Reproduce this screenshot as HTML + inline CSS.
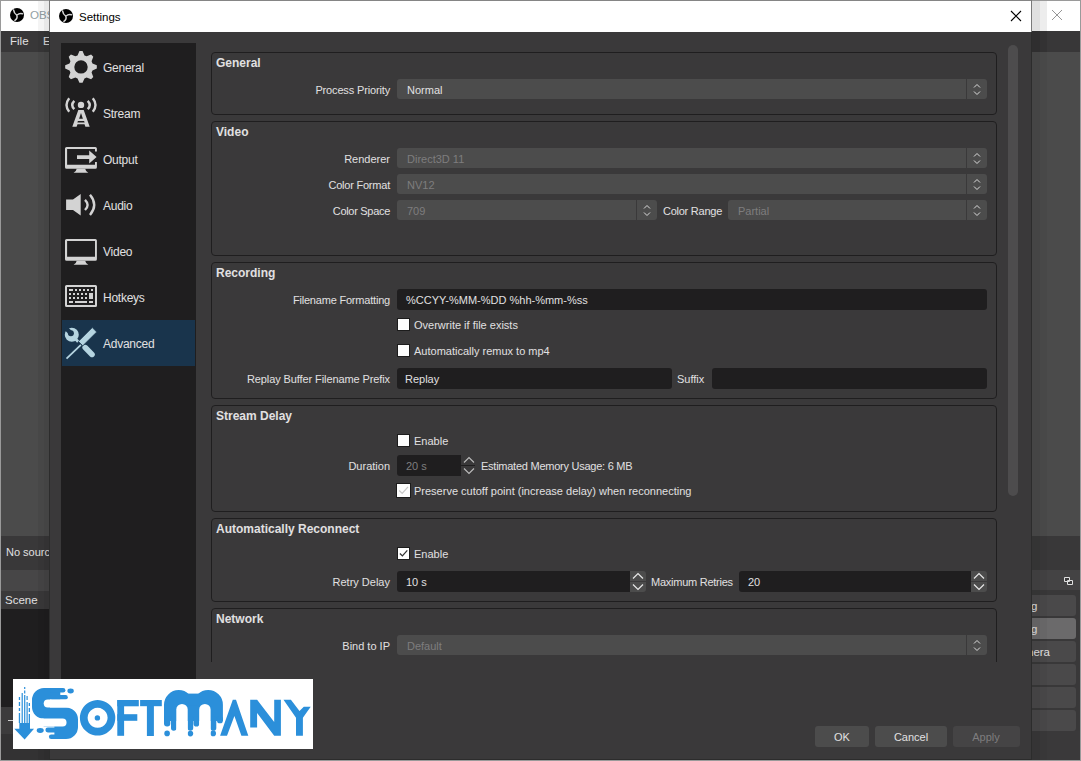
<!DOCTYPE html>
<html><head><meta charset="utf-8"><style>
html,body{margin:0;padding:0;}
body{width:1081px;height:761px;overflow:hidden;position:relative;background:#4b4b4b;font-family:"Liberation Sans",sans-serif;}
.r{position:absolute;box-sizing:content-box;}
.t{position:absolute;white-space:nowrap;}
svg.r{overflow:visible}
</style></head><body>
<div class="r" style="left:0px;top:0px;width:1081px;height:761px;background:#4b4b4b;"></div>
<div class="r" style="left:0px;top:0px;width:1081px;height:1px;background:#9a9a9a;"></div>
<div class="r" style="left:0px;top:0px;width:1px;height:761px;background:#9a9a9a;"></div>
<div class="r" style="left:1080px;top:0px;width:1px;height:761px;background:#9a9a9a;"></div>
<div class="r" style="left:0px;top:760px;width:1081px;height:1px;background:#9a9a9a;"></div>
<div class="r" style="left:1px;top:1px;width:1079px;height:30px;background:#ffffff;"></div>
<div class="r" style="left:1px;top:31px;width:1079px;height:21px;background:#383738;"></div>
<svg class="r" style="left:10px;top:8px" width="14" height="14" viewBox="-10 -10 20 20"><circle cx="0" cy="0" r="10" fill="#000"/>
<path d="M-0.3 0.3 Q-4.2 -2 -4.9 -7.2 M-0.3 0.3 Q3.4 -2.8 7.6 -1.8 M-0.3 0.3 Q1.4 4.6 -3 7.6" fill="none" stroke="#d8d8d8" stroke-width="2.1" stroke-linecap="round"/></svg>
<div class="t" style="left:30px;top:10.27px;font-size:11.5px;line-height:11.5px;color:#93a1a4;font-weight:normal;">OBS</div>
<div class="t" style="left:10px;top:36.27px;font-size:11.5px;line-height:11.5px;color:#e1e0e1;font-weight:normal;">File</div>
<div class="t" style="left:43px;top:36.27px;font-size:11.5px;line-height:11.5px;color:#e1e0e1;font-weight:normal;">E</div>
<svg class="r" style="left:1052px;top:10px" width="10" height="10" viewBox="0 0 10 10"><path d="M0 0 L10 10 M10 0 L0 10" stroke="#8a8a8a" stroke-width="0.9"/></svg>
<div class="r" style="left:1px;top:536px;width:49px;height:34px;background:#393839;"></div>
<div class="t" style="left:6px;top:546.69px;font-size:11px;line-height:11px;color:#e1e0e1;font-weight:normal;">No source</div>
<div class="r" style="left:1px;top:570px;width:49px;height:21px;background:#474647;"></div>
<div class="r" style="left:1px;top:591px;width:49px;height:18px;background:#3a393a;"></div>
<div class="t" style="left:5px;top:595.27px;font-size:11.5px;line-height:11.5px;color:#e1e0e1;font-weight:normal;">Scene</div>
<div class="r" style="left:1px;top:609px;width:49px;height:98px;background:#1f1e1f;"></div>
<div class="r" style="left:1px;top:707px;width:49px;height:27px;background:#3c3b3c;"></div>
<div class="r" style="left:8px;top:720px;width:6px;height:1px;background:#d0d0d0;"></div>
<div class="r" style="left:1px;top:734px;width:49px;height:26px;background:#333233;"></div>
<div class="r" style="left:1031px;top:536px;width:49px;height:34px;background:#393839;"></div>
<div class="r" style="left:1031px;top:570px;width:49px;height:20px;background:#444344;"></div>
<div class="r" style="left:1031px;top:590px;width:49px;height:170px;background:#393839;"></div>
<div class="r" style="left:1020px;top:595px;width:56px;height:21px;background:#4a494a;border-radius:3px;"></div>
<div class="r" style="left:1020px;top:618px;width:56px;height:21px;background:#6b6a6b;border-radius:3px;"></div>
<div class="r" style="left:1020px;top:641px;width:56px;height:21px;background:#4a494a;border-radius:3px;"></div>
<div class="r" style="left:1020px;top:664px;width:56px;height:21px;background:#4a494a;border-radius:3px;"></div>
<div class="r" style="left:1020px;top:687px;width:56px;height:21px;background:#4a494a;border-radius:3px;"></div>
<div class="r" style="left:1020px;top:710px;width:56px;height:21px;background:#4a494a;border-radius:3px;"></div>
<div class="t" style="left:1031px;top:601.27px;font-size:11.5px;line-height:11.5px;color:#e1e0e1;font-weight:normal;">g</div>
<div class="t" style="left:1031px;top:624.27px;font-size:11.5px;line-height:11.5px;color:#e1e0e1;font-weight:normal;">g</div>
<div class="t" style="left:1031px;top:647.27px;font-size:11.5px;line-height:11.5px;color:#e1e0e1;font-weight:normal;left:1027px;">nera</div>
<div class="r" style="left:1031px;top:731px;width:49px;height:29px;background:#3a393a;"></div>
<svg class="r" style="left:1064px;top:577px" width="9" height="8" viewBox="0 0 9 8"><path d="M0.5 0.5 H5.5 V4.5 H0.5 Z M3.5 3.5 H8.5 V7.5 H3.5 Z" fill="#3c3b3c" stroke="#e0e0e0" stroke-width="1"/></svg>
<div class="r" style="left:38px;top:1px;width:6px;height:759px;background:rgba(0,0,0,0.045);"></div>
<div class="r" style="left:44px;top:1px;width:5px;height:759px;background:rgba(0,0,0,0.09);"></div>
<div class="r" style="left:1032px;top:1px;width:8px;height:30px;background:rgba(0,0,0,0.12);"></div>
<div class="r" style="left:1040px;top:1px;width:7px;height:30px;background:rgba(0,0,0,0.07);"></div>
<div class="r" style="left:1032px;top:31px;width:8px;height:21px;background:rgba(0,0,0,0.16);"></div>
<div class="r" style="left:1040px;top:31px;width:7px;height:21px;background:rgba(0,0,0,0.08);"></div>
<div class="r" style="left:1032px;top:52px;width:8px;height:708px;background:rgba(0,0,0,0.07);"></div>
<div class="r" style="left:1040px;top:52px;width:7px;height:708px;background:rgba(0,0,0,0.03);"></div>
<div class="r" style="left:49px;top:0px;width:983px;height:760px;background:#2c2c2c;"></div>
<div class="r" style="left:49px;top:0px;width:983px;height:1px;background:#858585;"></div>
<div class="r" style="left:49px;top:0px;width:1px;height:32px;background:#7a7a7a;"></div>
<div class="r" style="left:1031px;top:0px;width:1px;height:32px;background:#7a7a7a;"></div>
<div class="r" style="left:50px;top:1px;width:981px;height:31px;background:#ffffff;"></div>
<div class="r" style="left:50px;top:32px;width:981px;height:727px;background:#3a393a;"></div>
<svg class="r" style="left:59px;top:9px" width="14" height="14" viewBox="-10 -10 20 20"><circle cx="0" cy="0" r="10" fill="#000"/>
<path d="M-0.3 0.3 Q-4.2 -2 -4.9 -7.2 M-0.3 0.3 Q3.4 -2.8 7.6 -1.8 M-0.3 0.3 Q1.4 4.6 -3 7.6" fill="none" stroke="#d8d8d8" stroke-width="2.1" stroke-linecap="round"/></svg>
<div class="t" style="left:79px;top:12.27px;font-size:11.5px;line-height:11.5px;color:#000;font-weight:normal;">Settings</div>
<svg class="r" style="left:1011px;top:11px" width="10" height="10" viewBox="0 0 10 10"><path d="M0 0 L10 10 M10 0 L0 10" stroke="#000" stroke-width="1.1"/></svg>
<div class="r" style="left:61px;top:43px;width:135px;height:673px;background:#1f1e1f;"></div>
<div class="r" style="left:62px;top:320px;width:133px;height:46px;background:#19344c;"></div>
<div class="t" style="left:103px;top:61.84px;font-size:12px;line-height:12px;color:#e1e0e1;font-weight:normal;letter-spacing:-0.25px;">General</div>
<div class="t" style="left:103px;top:107.84px;font-size:12px;line-height:12px;color:#e1e0e1;font-weight:normal;letter-spacing:-0.25px;">Stream</div>
<div class="t" style="left:103px;top:153.84px;font-size:12px;line-height:12px;color:#e1e0e1;font-weight:normal;letter-spacing:-0.25px;">Output</div>
<div class="t" style="left:103px;top:199.84px;font-size:12px;line-height:12px;color:#e1e0e1;font-weight:normal;letter-spacing:-0.25px;">Audio</div>
<div class="t" style="left:103px;top:245.84px;font-size:12px;line-height:12px;color:#e1e0e1;font-weight:normal;letter-spacing:-0.25px;">Video</div>
<div class="t" style="left:103px;top:291.84px;font-size:12px;line-height:12px;color:#e1e0e1;font-weight:normal;letter-spacing:-0.25px;">Hotkeys</div>
<div class="t" style="left:103px;top:337.84px;font-size:12px;line-height:12px;color:#e1e0e1;font-weight:normal;letter-spacing:-0.25px;">Advanced</div>
<svg class="r" style="left:0;top:0" width="1081" height="761"><path d="M77.52 55.42 L79.44 51.08 L82.56 51.08 L84.48 55.42 L86.66 56.32 L91.09 54.61 L93.29 56.81 L91.58 61.24 L92.48 63.42 L96.82 65.34 L96.82 68.46 L92.48 70.38 L91.58 72.56 L93.29 76.99 L91.09 79.19 L86.66 77.48 L84.48 78.38 L82.56 82.72 L79.44 82.72 L77.52 78.38 L75.34 77.48 L70.91 79.19 L68.71 76.99 L70.42 72.56 L69.52 70.38 L65.18 68.46 L65.18 65.34 L69.52 63.42 L70.42 61.24 L68.71 56.81 L70.91 54.61 L75.34 56.32 Z M87.7 66.9 A6.7 6.7 0 1 0 74.3 66.9 A6.7 6.7 0 1 0 87.7 66.9 Z" fill="#d3d3d3" fill-rule="evenodd"/></svg>
<svg class="r" style="left:0;top:0" width="1081" height="761"><g fill="none" stroke="#d3d3d3" stroke-width="2.4">
<path d="M69.2 98.2 Q63.8 105 69.2 111.8"/><path d="M92.8 98.2 Q98.2 105 92.8 111.8"/>
<path d="M74.3 100.8 Q70.2 105 74.3 109.2"/><path d="M87.7 100.8 Q91.8 105 87.7 109.2"/></g>
<circle cx="81" cy="104.9" r="3.2" fill="#d3d3d3"/>
<path d="M78.3 110 H83.7 L89.7 126.8 H85.4 L84.5 124.3 H77.5 L76.6 126.8 H72.3 Z M81 113 L82.9 118.8 H79.1 Z M77.9 121.1 H84.1 L84.6 122.5 H77.4 Z" fill="#d3d3d3" fill-rule="evenodd"/></svg>
<svg class="r" style="left:0;top:0" width="1081" height="761"><g fill="#d3d3d3">
<path d="M66.6 147 H95.3 Q96.9 147 96.9 148.6 V151.4 H95 V149.1 H67.1 V164.8 H95 V162.1 H96.9 V167.2 Q96.9 168.8 95.3 168.8 H66.6 Q65 168.8 65 167.2 V148.6 Q65 147 66.6 147 Z"/>
<path d="M76.7 168.8 H85.2 Q85.6 171.5 88.3 172.8 H73.6 Q76.3 171.5 76.7 168.8 Z"/>
<path d="M77 155.2 H89.2 V150.5 L96.6 157 L89.2 163.4 V159 H77 Z"/></g></svg>
<svg class="r" style="left:0;top:0" width="1081" height="761"><g fill="#d3d3d3">
<path d="M66.1 199.5 H73 L80.7 194 V215.6 L73 210.1 H66.1 Z"/></g>
<g fill="none" stroke="#d3d3d3" stroke-width="2.4">
<path d="M85 199.8 Q90.2 204.9 85 210"/><path d="M90 194.8 Q98.4 204.9 90 215"/></g></svg>
<svg class="r" style="left:0;top:0" width="1081" height="761"><g fill="#d3d3d3">
<path d="M66.6 239 H95.3 Q96.9 239 96.9 240.6 V259.2 Q96.9 260.8 95.3 260.8 H66.6 Q65 260.8 65 259.2 V240.6 Q65 239 66.6 239 Z M67.1 241.1 V256.8 H95 V241.1 Z" fill-rule="evenodd"/>
<path d="M76.7 260.8 H85.2 Q85.6 263.5 88.3 264.8 H73.6 Q76.3 263.5 76.7 260.8 Z"/></g></svg>
<svg class="r" style="left:0;top:0" width="1081" height="761"><g fill="#d3d3d3">
<path d="M66.5 285 H95.5 Q97 285 97 286.5 V305.5 Q97 307 95.5 307 H66.5 Q65 307 65 305.5 V286.5 Q65 285 66.5 285 Z M67 287 V305 H95 V287 Z" fill-rule="evenodd"/>
<rect x="69" y="289" width="4" height="2"/><rect x="75" y="289" width="2" height="2"/><rect x="79" y="289" width="2" height="2"/><rect x="83" y="289" width="2" height="2"/><rect x="87" y="289" width="2" height="2"/><rect x="91" y="289" width="2" height="2"/><rect x="69" y="293" width="2" height="2"/><rect x="69" y="297" width="2" height="2"/><rect x="73" y="293" width="2" height="2"/><rect x="73" y="297" width="2" height="2"/><rect x="77" y="293" width="2" height="2"/><rect x="77" y="297" width="2" height="2"/><rect x="81" y="293" width="2" height="2"/><rect x="81" y="297" width="2" height="2"/><rect x="85" y="293" width="2" height="2"/><rect x="85" y="297" width="2" height="2"/><rect x="89" y="293" width="4" height="6"/><rect x="69" y="301" width="4" height="2"/><rect x="75" y="301" width="12" height="2"/><rect x="89" y="301" width="4" height="2"/></g></svg>
<svg class="r" style="left:0;top:0" width="1081" height="761">
<circle cx="71.8" cy="334.8" r="7" fill="#b5d4e0"/>
<circle cx="70.9" cy="333.2" r="3" fill="#19344c"/>
<path d="M70.9 333.2 L65.3 327.6" stroke="#19344c" stroke-width="4.4"/>
<path d="M75.5 339 L78.2 341.7" stroke="#b5d4e0" stroke-width="3"/>
<path d="M85.2 347.6 L92 354.4" stroke="#b5d4e0" stroke-width="5.6" stroke-linecap="round"/>
<path d="M78.41 341.4 L92.31 327.6 L96.69 332 L82.79 345.8 Z" fill="#b5d4e0" stroke="#19344c" stroke-width="0.7"/>
<path d="M80.9 344.8 L66.5 358.7" stroke="#b5d4e0" stroke-width="1.8"/>
</svg>
<div class="r" style="left:197px;top:43px;width:810px;height:619px;overflow:hidden;">
<div class="r" style="left:-197px;top:-43px;width:1081px;height:761px;">
<div class="r" style="left:211px;top:52px;width:784px;height:61px;border:1px solid #1f1e1f;border-radius:4px;"></div>
<div class="t" style="left:216px;top:56.84px;font-size:12px;line-height:12px;color:#e1e0e1;font-weight:bold;">General</div>
<div class="t" style="right:691px;top:84.69px;font-size:11px;line-height:11px;color:#e1e0e1;font-weight:normal;letter-spacing:-0.15px;">Process Priority</div>
<div class="r" style="left:397px;top:79px;width:590px;height:20px;background:#4c4c4c;border-radius:3px;"></div>
<div class="r" style="left:966px;top:79px;width:1px;height:20px;background:#3a393a;"></div>
<svg class="r" style="left:972px;top:82px" width="10" height="14" viewBox="0 0 10 14"><path d="M2 5.5 L5 2.5 L8 5.5 M2 9.5 L5 12.5 L8 9.5" fill="none" stroke="#dcdcdc" stroke-width="1"/></svg>
<div class="t" style="left:407px;top:84.69px;font-size:11px;line-height:11px;color:#e1e0e1;font-weight:normal;">Normal</div>
<div class="r" style="left:211px;top:121px;width:784px;height:133px;border:1px solid #1f1e1f;border-radius:4px;"></div>
<div class="t" style="left:216px;top:125.84px;font-size:12px;line-height:12px;color:#e1e0e1;font-weight:bold;">Video</div>
<div class="t" style="right:691px;top:153.69px;font-size:11px;line-height:11px;color:#e1e0e1;font-weight:normal;">Renderer</div>
<div class="r" style="left:397px;top:148px;width:590px;height:20px;background:#4c4c4c;border-radius:3px;"></div>
<div class="r" style="left:966px;top:148px;width:1px;height:20px;background:#3a393a;"></div>
<svg class="r" style="left:972px;top:151px" width="10" height="14" viewBox="0 0 10 14"><path d="M2 5.5 L5 2.5 L8 5.5 M2 9.5 L5 12.5 L8 9.5" fill="none" stroke="#dcdcdc" stroke-width="1"/></svg>
<div class="t" style="left:407px;top:153.69px;font-size:11px;line-height:11px;color:#7e7d7e;font-weight:normal;">Direct3D 11</div>
<div class="t" style="right:691px;top:179.69px;font-size:11px;line-height:11px;color:#e1e0e1;font-weight:normal;letter-spacing:-0.22px;">Color Format</div>
<div class="r" style="left:397px;top:174px;width:590px;height:20px;background:#4c4c4c;border-radius:3px;"></div>
<div class="r" style="left:966px;top:174px;width:1px;height:20px;background:#3a393a;"></div>
<svg class="r" style="left:972px;top:177px" width="10" height="14" viewBox="0 0 10 14"><path d="M2 5.5 L5 2.5 L8 5.5 M2 9.5 L5 12.5 L8 9.5" fill="none" stroke="#dcdcdc" stroke-width="1"/></svg>
<div class="t" style="left:407px;top:179.69px;font-size:11px;line-height:11px;color:#7e7d7e;font-weight:normal;">NV12</div>
<div class="t" style="right:691px;top:205.69px;font-size:11px;line-height:11px;color:#e1e0e1;font-weight:normal;letter-spacing:-0.3px;">Color Space</div>
<div class="r" style="left:397px;top:200px;width:260px;height:20px;background:#4c4c4c;border-radius:3px;"></div>
<div class="r" style="left:636px;top:200px;width:1px;height:20px;background:#3a393a;"></div>
<svg class="r" style="left:642px;top:203px" width="10" height="14" viewBox="0 0 10 14"><path d="M2 5.5 L5 2.5 L8 5.5 M2 9.5 L5 12.5 L8 9.5" fill="none" stroke="#dcdcdc" stroke-width="1"/></svg>
<div class="t" style="left:407px;top:205.69px;font-size:11px;line-height:11px;color:#7e7d7e;font-weight:normal;">709</div>
<div class="t" style="left:663px;top:205.69px;font-size:11px;line-height:11px;color:#e1e0e1;font-weight:normal;letter-spacing:-0.25px;">Color Range</div>
<div class="r" style="left:728px;top:200px;width:259px;height:20px;background:#4c4c4c;border-radius:3px;"></div>
<div class="r" style="left:966px;top:200px;width:1px;height:20px;background:#3a393a;"></div>
<svg class="r" style="left:972px;top:203px" width="10" height="14" viewBox="0 0 10 14"><path d="M2 5.5 L5 2.5 L8 5.5 M2 9.5 L5 12.5 L8 9.5" fill="none" stroke="#dcdcdc" stroke-width="1"/></svg>
<div class="t" style="left:738px;top:205.69px;font-size:11px;line-height:11px;color:#7e7d7e;font-weight:normal;">Partial</div>
<div class="r" style="left:211px;top:262px;width:784px;height:135px;border:1px solid #1f1e1f;border-radius:4px;"></div>
<div class="t" style="left:216px;top:266.84px;font-size:12px;line-height:12px;color:#e1e0e1;font-weight:bold;">Recording</div>
<div class="t" style="right:691px;top:294.69px;font-size:11px;line-height:11px;color:#e1e0e1;font-weight:normal;letter-spacing:-0.2px;">Filename Formatting</div>
<div class="r" style="left:397px;top:289px;width:590px;height:21px;background:#1f1e1f;border-radius:3px;"></div>
<div class="t" style="left:406px;top:294.69px;font-size:11px;line-height:11px;color:#e1e0e1;font-weight:normal;">%CCYY-%MM-%DD %hh-%mm-%ss</div>
<div class="r" style="left:398px;top:319px;width:11px;height:11px;background:#fdfdfd;box-shadow:0 0 0 1px #1c1c1c;"></div>
<div class="t" style="left:414px;top:319.69px;font-size:11px;line-height:11px;color:#e1e0e1;font-weight:normal;">Overwrite if file exists</div>
<div class="r" style="left:398px;top:345px;width:11px;height:11px;background:#fdfdfd;box-shadow:0 0 0 1px #1c1c1c;"></div>
<div class="t" style="left:414px;top:345.69px;font-size:11px;line-height:11px;color:#e1e0e1;font-weight:normal;">Automatically remux to mp4</div>
<div class="t" style="right:691px;top:373.69px;font-size:11px;line-height:11px;color:#e1e0e1;font-weight:normal;letter-spacing:-0.1px;">Replay Buffer Filename Prefix</div>
<div class="r" style="left:397px;top:368px;width:275px;height:21px;background:#1f1e1f;border-radius:3px;"></div>
<div class="t" style="left:405px;top:373.69px;font-size:11px;line-height:11px;color:#e1e0e1;font-weight:normal;">Replay</div>
<div class="t" style="left:677px;top:373.69px;font-size:11px;line-height:11px;color:#e1e0e1;font-weight:normal;">Suffix</div>
<div class="r" style="left:712px;top:368px;width:275px;height:21px;background:#1f1e1f;border-radius:3px;"></div>
<div class="r" style="left:211px;top:405px;width:784px;height:105px;border:1px solid #1f1e1f;border-radius:4px;"></div>
<div class="t" style="left:216px;top:409.84px;font-size:12px;line-height:12px;color:#e1e0e1;font-weight:bold;">Stream Delay</div>
<div class="r" style="left:398px;top:435px;width:11px;height:11px;background:#fdfdfd;box-shadow:0 0 0 1px #1c1c1c;"></div>
<div class="t" style="left:414px;top:435.69px;font-size:11px;line-height:11px;color:#e1e0e1;font-weight:normal;">Enable</div>
<div class="t" style="right:691px;top:460.69px;font-size:11px;line-height:11px;color:#e1e0e1;font-weight:normal;">Duration</div>
<div class="r" style="left:397px;top:455px;width:64px;height:21px;background:#1f1e1f;border-radius:3px 0 0 3px;"></div>
<div class="t" style="left:406px;top:460.69px;font-size:11px;line-height:11px;color:#7e7d7e;font-weight:normal;">20 s</div>
<svg class="r" style="left:461px;top:455px" width="14" height="21" viewBox="0 0 14 21"><path d="M3 7.5 L8 2.5 L13 7.5 M3 13.5 L8 18.5 L13 13.5" fill="none" stroke="#bdbdbd" stroke-width="1.1"/><path d="M0 10.5 H14" stroke="#1f1e1f" stroke-width="1"/></svg>
<div class="t" style="left:481px;top:460.69px;font-size:11px;line-height:11px;color:#e1e0e1;font-weight:normal;letter-spacing:-0.25px;">Estimated Memory Usage: 6 MB</div>
<div class="r" style="left:397px;top:484px;width:13px;height:13px;background:#fdfdfd;box-shadow:0 0 0 1px #1c1c1c;"></div>
<svg class="r" style="left:397px;top:484px" width="13" height="13" viewBox="0 0 13 13"><path d="M2.2 6.5 L5.2 9.4 L11.0 2.9" fill="none" stroke="#c8c8c8" stroke-width="1.3"/></svg>
<div class="t" style="left:414px;top:485.69px;font-size:11px;line-height:11px;color:#e1e0e1;font-weight:normal;">Preserve cutoff point (increase delay) when reconnecting</div>
<div class="r" style="left:211px;top:518px;width:784px;height:82px;border:1px solid #1f1e1f;border-radius:4px;"></div>
<div class="t" style="left:216px;top:522.84px;font-size:12px;line-height:12px;color:#e1e0e1;font-weight:bold;">Automatically Reconnect</div>
<div class="r" style="left:398px;top:548px;width:11px;height:11px;background:#fdfdfd;box-shadow:0 0 0 1px #1c1c1c;"></div>
<svg class="r" style="left:398px;top:548px" width="11" height="11" viewBox="0 0 11 11"><path d="M1.9 5.5 L4.4 7.9 L9.3 2.4" fill="none" stroke="#333" stroke-width="1.3"/></svg>
<div class="t" style="left:414px;top:548.69px;font-size:11px;line-height:11px;color:#e1e0e1;font-weight:normal;">Enable</div>
<div class="t" style="right:691px;top:576.69px;font-size:11px;line-height:11px;color:#e1e0e1;font-weight:normal;">Retry Delay</div>
<div class="r" style="left:397px;top:571px;width:233px;height:21px;background:#1f1e1f;border-radius:3px 0 0 3px;"></div>
<div class="t" style="left:406px;top:576.69px;font-size:11px;line-height:11px;color:#e1e0e1;font-weight:normal;">10 s</div>
<div class="r" style="left:630px;top:571px;width:16px;height:10px;background:#4c4c4c;border-radius:0 3px 0 0;"></div>
<div class="r" style="left:630px;top:582px;width:16px;height:10px;background:#4c4c4c;border-radius:0 0 3px 0;"></div>
<svg class="r" style="left:630px;top:571px" width="16" height="21" viewBox="0 0 16 21"><path d="M3 7.5 L8 2.5 L13 7.5 M3 13.5 L8 18.5 L13 13.5" fill="none" stroke="#e8e8e8" stroke-width="1.2"/></svg>
<div class="t" style="left:651px;top:576.69px;font-size:11px;line-height:11px;color:#e1e0e1;font-weight:normal;letter-spacing:-0.25px;">Maximum Retries</div>
<div class="r" style="left:739px;top:571px;width:232px;height:21px;background:#1f1e1f;border-radius:3px 0 0 3px;"></div>
<div class="t" style="left:748px;top:576.69px;font-size:11px;line-height:11px;color:#e1e0e1;font-weight:normal;">20</div>
<div class="r" style="left:971px;top:571px;width:16px;height:10px;background:#4c4c4c;border-radius:0 3px 0 0;"></div>
<div class="r" style="left:971px;top:582px;width:16px;height:10px;background:#4c4c4c;border-radius:0 0 3px 0;"></div>
<svg class="r" style="left:971px;top:571px" width="16" height="21" viewBox="0 0 16 21"><path d="M3 7.5 L8 2.5 L13 7.5 M3 13.5 L8 18.5 L13 13.5" fill="none" stroke="#e8e8e8" stroke-width="1.2"/></svg>
<div class="r" style="left:211px;top:608px;width:784px;height:91px;border:1px solid #1f1e1f;border-radius:4px;"></div>
<div class="t" style="left:216px;top:612.84px;font-size:12px;line-height:12px;color:#e1e0e1;font-weight:bold;">Network</div>
<div class="t" style="right:691px;top:640.69px;font-size:11px;line-height:11px;color:#e1e0e1;font-weight:normal;">Bind to IP</div>
<div class="r" style="left:397px;top:635px;width:590px;height:20px;background:#4c4c4c;border-radius:3px;"></div>
<div class="r" style="left:966px;top:635px;width:1px;height:20px;background:#3a393a;"></div>
<svg class="r" style="left:972px;top:638px" width="10" height="14" viewBox="0 0 10 14"><path d="M2 5.5 L5 2.5 L8 5.5 M2 9.5 L5 12.5 L8 9.5" fill="none" stroke="#dcdcdc" stroke-width="1"/></svg>
<div class="t" style="left:407px;top:640.69px;font-size:11px;line-height:11px;color:#7e7d7e;font-weight:normal;">Default</div>
</div></div>
<div class="r" style="left:1008px;top:45px;width:10px;height:451px;background:#4d4c4d;border-radius:5px;"></div>
<div class="r" style="left:815px;top:726px;width:54px;height:21px;background:#4c4c4c;border-radius:3px;"></div>
<div class="t" style="left:642px;width:400px;text-align:center;top:731.69px;font-size:11px;line-height:11px;color:#e1e0e1;font-weight:normal;">OK</div>
<div class="r" style="left:875px;top:726px;width:72px;height:21px;background:#4c4c4c;border-radius:3px;"></div>
<div class="t" style="left:711px;width:400px;text-align:center;top:731.69px;font-size:11px;line-height:11px;color:#e1e0e1;font-weight:normal;">Cancel</div>
<div class="r" style="left:953px;top:726px;width:67px;height:21px;background:#454445;border-radius:3px;"></div>
<div class="t" style="left:786px;width:400px;text-align:center;top:731.69px;font-size:11px;line-height:11px;color:#7e7d7e;font-weight:normal;">Apply</div>
<div class="r" style="left:13px;top:679px;width:300px;height:70px;background:#ffffff;"></div>
<svg class="r" style="left:0;top:0" width="1081" height="761" viewBox="0 0 1081 761">
<g fill="#2b8fda">
<!-- arrow -->
<path d="M14.3 728.7 H34 L24.6 739.4 Z"/>
<rect x="19.3" y="723" width="10.7" height="6"/>
<rect x="18.8" y="697" width="1.3" height="3"/><rect x="18.8" y="702" width="1.3" height="4"/><rect x="18.8" y="708" width="1.3" height="3"/><rect x="18.8" y="713" width="1.3" height="10"/>
<rect x="21.6" y="693" width="1.2" height="30"/>
<rect x="24.1" y="687" width="1.2" height="2"/><rect x="24.1" y="690.5" width="1.2" height="3"/><rect x="24.1" y="695" width="1.2" height="28"/>
<rect x="26.5" y="696" width="1.2" height="4"/><rect x="26.5" y="702" width="1.2" height="21"/>
<rect x="28.7" y="703" width="1.3" height="3"/><rect x="28.7" y="708" width="1.3" height="4"/><rect x="28.7" y="714" width="1.3" height="9"/>
<!-- S -->
<path d="M60.3 688 H44 A12 12 0 0 0 32 700 V707 A11.6 11.6 0 0 0 43.6 718.6 H50 V699.4 H60.3 Z"/>
<rect x="50" y="688" width="15.4" height="4.5" rx="2.25"/>
<rect x="50" y="695" width="17.8" height="4.4" rx="2.2"/>
<ellipse cx="70.6" cy="691" rx="3.2" ry="2.4"/>
<path d="M43.6 707.6 H66 A12 12 0 0 1 78 719.6 V727.1 A12 12 0 0 1 66 739.1 H54.4 V726.5 H43.6 Z"/>
<rect x="45.4" y="727.5" width="14.6" height="4.9" rx="2.4"/>
<rect x="48.9" y="734.4" width="11" height="4.7" rx="2.3"/>
<ellipse cx="40.2" cy="730.5" rx="3.5" ry="2.4"/>
<path d="M47.8 699.4 H72 V707.6 H47.8 A4.1 4.1 0 0 1 47.8 699.4 Z" fill="#fff"/>
<path d="M40 718.6 H62.6 A3.95 3.95 0 0 1 62.6 726.5 H40 Z" fill="#fff"/>
<!-- O -->
<path d="M97.6 700.1 A17.7 17.7 0 1 1 97.59 700.1 Z M97.6 707.8 A10 10 0 1 0 97.61 707.8 Z" fill-rule="evenodd"/>
<circle cx="97.4" cy="717.9" r="2.7"/>
<!-- F -->
<rect x="117.3" y="700" width="6.8" height="35.8"/>
<rect x="117.3" y="700" width="21.5" height="6.3"/>
<rect x="117.3" y="714.2" width="20" height="6.6"/>
<!-- T -->
<rect x="140.1" y="700" width="21.7" height="6.2"/>
<rect x="146.9" y="700" width="7" height="36"/>
<!-- M -->
<path d="M164 724 V704.8 A14.6 14.6 0 0 1 193.4 704.8 A14.7 14.7 0 0 1 222.9 704.8 V721 H164 Z"/>
<rect x="181" y="693.6" width="25" height="12"/>
<rect x="164" y="716" width="6.3" height="10.5" rx="3"/>
<rect x="171" y="716" width="5.5" height="14.7" rx="2.7"/>
<rect x="187.6" y="716" width="5.6" height="14.7" rx="2.7"/>
<rect x="193.5" y="716" width="5.8" height="10.5" rx="2.8"/>
<rect x="210.5" y="716" width="5.8" height="14.7" rx="2.8"/>
<rect x="217" y="716" width="5.9" height="7.3" rx="2.9"/>
<circle cx="167.1" cy="733.4" r="2.8"/><circle cx="190.4" cy="733.6" r="2.8"/><circle cx="213.2" cy="733.4" r="2.8"/>
<!-- A -->
<path d="M220.1 735.8 L232.8 699.7 H236 L248.3 735.8 H241.4 L234.4 715.9 L227 735.8 Z"/>
<!-- N -->
<path d="M250.2 699.7 H257.1 L274.2 722 V699.7 H280.9 V735.8 H274.2 L257.1 713 V727.5 H250.2 Z"/>
<!-- Y -->
<path d="M283.5 699.7 H290.9 L299.5 711 L303.8 706.7 H310.7 L302.9 717.8 V735.8 H296 V717.8 Z"/>
</g>
<g fill="#ffffff">
<path d="M176.3 745 V709.6 A5.7 5.7 0 0 1 187.7 709.6 V745 Z"/>
<path d="M199.2 745 V709.6 A5.7 5.7 0 0 1 210.6 709.6 V745 Z"/>
</g>
</svg>

</body></html>
